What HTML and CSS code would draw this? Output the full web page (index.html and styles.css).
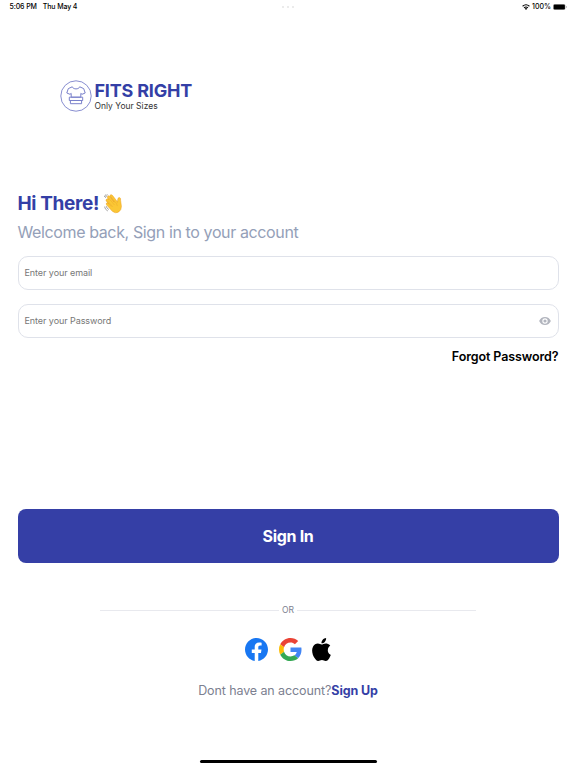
FILE: index.html
```html
<!DOCTYPE html>
<html lang="en">
<head>
<meta charset="UTF-8">
<title>Fits Right - Sign In</title>
<link rel="stylesheet" href="styles.css">
</head>
<body>
<div class="status">
  <div class="status-left"><span>5:06 PM</span><span>Thu May 4</span></div>
  <div class="dots"><i></i><i></i><i></i></div>
  <div class="status-right">
    <svg class="wifi" viewBox="0 0 16 12"><path d="M8 12l2.6-3.1a4 4 0 0 0-5.2 0zM3.4 6.9l1.3 1.5a5.1 5.1 0 0 1 6.6 0l1.3-1.5a7 7 0 0 0-9.2 0zM.5 3.7l1.4 1.6a9.4 9.4 0 0 1 12.2 0l1.4-1.6a11.4 11.4 0 0 0-15 0z"/></svg>
    <span>100%</span>
    <svg class="battery" viewBox="0 0 28 12"><rect x=".5" y=".5" width="24" height="11" rx="3.2" fill="none" stroke="#999"/><rect x="1.2" y="1.2" width="22.6" height="9.6" rx="2.4"/><path d="M26 4v4q1.6-.6 1.6-2T26 4z" fill="#999"/></svg>
  </div>
</div>
<div class="brand">
  <svg class="logo" viewBox="0 0 32 32" fill="none" stroke="#7a81cb">
    <circle cx="16" cy="16" r="15.2" stroke-width=".9"/>
    <path d="M12.3 6.8L8.3 8.6 6.8 13l3.2 1.3 1.2-.9v3.8h9.6v-3.8l1.2.9 3.2-1.3-1.5-4.4-4-1.8c-.9 2.8-6.5 2.8-7.4 0z" stroke-width="1"/>
    <path d="M9.3 17.2h13.4v3.3H9.3zM10.4 20.5h11.2v3.2H10.4z" stroke-width="1"/>
  </svg>
  <div>
    <div class="brand-name">FITS RIGHT</div>
    <div class="brand-tag">Only Your Sizes</div>
  </div>
</div>
<form class="login">
  <h1 class="title"><span>Hi There!</span>
    <svg class="wave" viewBox="0 0 40 40">
      <path d="M7 17.5L4.8 14.7Q2.8 11.8 5.2 10.2T9.4 11.5L7.2 7.8Q5.8 5 8.2 3.8T12 5.3L20.3 16.2 12.3 5.2Q11.1 2.6 13.4 1.7T17.3 3.2L26.8 15.6 27.4 10.9Q28 6.4 31 7.2T33.2 12.3L34.8 24Q35.6 31.5 29.5 35.8T16.6 34.5L5.7 22.6Q3.2 19.6 5.2 18.1T9.4 19.4z" fill="#fbc735" stroke="#e99b22" stroke-width=".9" stroke-linejoin="round"/>
      <path d="M7 14l10.2 11M10 9l10.5 12.5M13.4 5l10 13M9.4 19.4l5 5.6M27 15.5q-3.6 3.8-.8 8" fill="none" stroke="#e8a52b" stroke-width=".9" stroke-linecap="round"/>
      <path d="M3 7q.8-3.6 4-5.4M.8 5.2q1-3 3.4-4.4M1.2 26q.8 5.3 5.8 7.7M4.5 25q1 4 4.5 5.7" fill="none" stroke="#888" stroke-width="1.5" stroke-linecap="round"/>
    </svg>
  </h1>
  <p class="subtitle">Welcome back, Sign in to your account</p>
  <div class="field"><span>Enter your email</span></div>
  <div class="field"><span>Enter your Password</span>
    <svg class="eye" viewBox="1 4.5 22 15"><path fill="#b2b5be" fill-rule="evenodd" d="M12 4.5C7 4.5 2.73 7.61 1 12c1.73 4.39 6 7.5 11 7.5s9.27-3.11 11-7.5c-1.73-4.39-6-7.5-11-7.5zM12 17a5 5 0 1 1 0-10 5 5 0 0 1 0 10zm0-8a3 3 0 1 0 0 6 3 3 0 0 0 0-6z"/></svg>
  </div>
  <a class="forgot">Forgot Password?</a>
  <div class="btn">Sign In</div>
</form>
<div class="divider"><span>OR</span></div>
<div class="social">
  <svg class="facebook" viewBox="0 0 24 24"><path fill="#1877f2" d="M24 12.07C24 5.4 18.63 0 12 0S0 5.4 0 12.07C0 18.1 4.39 23.1 10.13 24v-8.44H7.08v-3.49h3.05V9.41c0-3.02 1.79-4.69 4.53-4.69 1.31 0 2.68.24 2.68.24v2.97h-1.51c-1.49 0-1.96.93-1.96 1.89v2.25h3.33l-.53 3.49h-2.8V24C19.61 23.1 24 18.1 24 12.07z"/></svg>
  <svg class="google" viewBox="0 0 48 48">
    <path fill="#ea4335" d="M24 9.5c3.54 0 6.71 1.22 9.21 3.6l6.85-6.85C35.9 2.38 30.47 0 24 0 14.62 0 6.51 5.38 2.56 13.22l7.98 6.19C12.43 13.72 17.74 9.5 24 9.5z"/>
    <path fill="#4285f4" d="M46.98 24.55c0-1.57-.15-3.09-.38-4.55H24v9.02h12.94c-.58 2.96-2.26 5.48-4.78 7.18l7.73 6c4.51-4.18 7.09-10.36 7.09-17.65z"/>
    <path fill="#fbbc05" d="M10.53 28.59A14.5 14.5 0 0 1 9.77 24c0-1.6.27-3.14.76-4.59l-7.98-6.19A23.9 23.9 0 0 0 0 24c0 3.88.92 7.54 2.56 10.78z"/>
    <path fill="#34a853" d="M24 48c6.48 0 11.93-2.13 15.89-5.81l-7.73-6c-2.15 1.45-4.92 2.3-8.16 2.3-6.26 0-11.57-4.22-13.47-9.91l-7.98 6.19C6.51 42.62 14.62 48 24 48z"/>
  </svg>
  <svg class="apple" viewBox="2.2 0 19.6 24"><path d="M12.15 6.9c-.95 0-2.42-1.08-3.96-1.04-2.04.03-3.91 1.18-4.96 3.01-2.12 3.68-.55 9.1 1.52 12.09 1.01 1.45 2.21 3.09 3.79 3.04 1.52-.07 2.09-.99 3.94-.99 1.83 0 2.35.99 3.96.95 1.64-.03 2.68-1.48 3.68-2.95 1.16-1.69 1.64-3.33 1.66-3.42-.04-.01-3.18-1.22-3.22-4.86-.03-3.04 2.48-4.49 2.6-4.56-1.43-2.09-3.62-2.32-4.39-2.38-2-.16-3.68 1.09-4.62 1.11zM15.53 3.83c.84-1.01 1.4-2.43 1.25-3.83-1.21.05-2.66.81-3.53 1.82-.78.9-1.45 2.34-1.27 3.71 1.34.1 2.71-.69 3.55-1.7"/></svg>
</div>
<div class="signup"><span>Dont have an account?</span><a>Sign Up</a></div>
<div class="home-bar"></div>
</body>
</html>
```
FILE: styles.css
```css
* {
  box-sizing: border-box;
}
body {
  margin: 0;
  height: 768px;
  overflow: hidden;
  background: #fff;
  font-family: Inter, "Liberation Sans", sans-serif;
  color: #000;
}
svg {
  display: block;
  flex-shrink: 0;
}
.status {
  display: grid;
  grid-template-columns: 1fr auto 1fr;
  align-items: center;
  height: 14px;
  padding: 0 9px 0 9.5px;
  font-size: 7px;
  font-weight: 500;
  line-height: 14px;
}
.status-left {
  display: flex;
  gap: 6px;
  letter-spacing: -.12px;
}
.status-right {
  display: flex;
  justify-content: flex-end;
  align-items: center;
  gap: 2px;
}
.dots {
  display: flex;
  gap: 3px;
}
.dots i {
  width: 2px;
  height: 2px;
  border-radius: 50%;
  background: #e4e4e4;
}
.wifi {
  width: 8px;
  height: 6px;
}
.battery {
  width: 14px;
  height: 6px;
}
.brand {
  display: flex;
  gap: 3px;
  margin: 65px 0 0 59.5px;
  height: 33px;
}
.logo {
  width: 32px;
  height: 32px;
  margin-top: 1px;
}
.brand-name {
  margin-top: 1px;
  font-size: 18px;
  font-weight: 700;
  line-height: 22px;
  letter-spacing: -.2px;
  color: #343fa6;
}
.brand-tag {
  font-size: 8.5px;
  line-height: 8px;
  color: #333;
}
.login {
  margin: 80px 17.5px 0;
}
.title {
  display: flex;
  align-items: center;
  gap: 5px;
  margin: 0;
  height: 24px;
  font-size: 19px;
  font-weight: 700;
  line-height: 24px;
  letter-spacing: -.35px;
  color: #343fa6;
}
.wave {
  width: 20px;
  height: 20px;
}
.subtitle {
  margin: 6px 0 14px;
  font-size: 16px;
  line-height: 20px;
  letter-spacing: -.38px;
  color: #94a0b8;
}
.field {
  display: flex;
  justify-content: space-between;
  align-items: center;
  height: 34px;
  margin-bottom: 14px;
  padding: 0 7px 2px 6px;
  border: 1px solid #dfe2ea;
  border-radius: 10px;
  font-size: 9px;
  letter-spacing: -.07px;
  color: #777;
}
.eye {
  width: 12px;
  height: 8px;
  margin-top: 1px;
}
.forgot {
  display: block;
  margin-top: -4px;
  text-align: right;
  font-size: 12.5px;
  font-weight: 600;
  line-height: 18px;
  letter-spacing: -.1px;
}
.btn {
  height: 54px;
  margin-top: 143px;
  border-radius: 8px;
  background: #353fa6;
  color: #fff;
  text-align: center;
  font-size: 16px;
  font-weight: 700;
  line-height: 54px;
  letter-spacing: -.3px;
}
.divider {
  display: flex;
  align-items: center;
  gap: 3px;
  width: 376px;
  height: 12px;
  margin: 41px auto 0;
  font-size: 8.5px;
  color: #7c8090;
}
.divider::before,
.divider::after {
  content: "";
  flex: 1;
  height: 1px;
  background: #e8e9ee;
}
.social {
  display: flex;
  justify-content: center;
  align-items: center;
  height: 24px;
  margin-top: 21px;
}
.facebook,
.google {
  width: 23px;
  height: 23px;
  margin-right: 11px;
}
.google {
  margin-right: 10px;
}
.apple {
  width: 19px;
  height: 23px;
}
.signup {
  display: flex;
  justify-content: center;
  margin-top: 21px;
  font-size: 12.5px;
  line-height: 18px;
  letter-spacing: -.1px;
  color: #7c8090;
}
.signup a {
  font-weight: 700;
  color: #343fa6;
}
.home-bar {
  width: 177px;
  height: 3px;
  margin: 60px auto 0;
  border-radius: 2px;
  background: #000;
}
```
